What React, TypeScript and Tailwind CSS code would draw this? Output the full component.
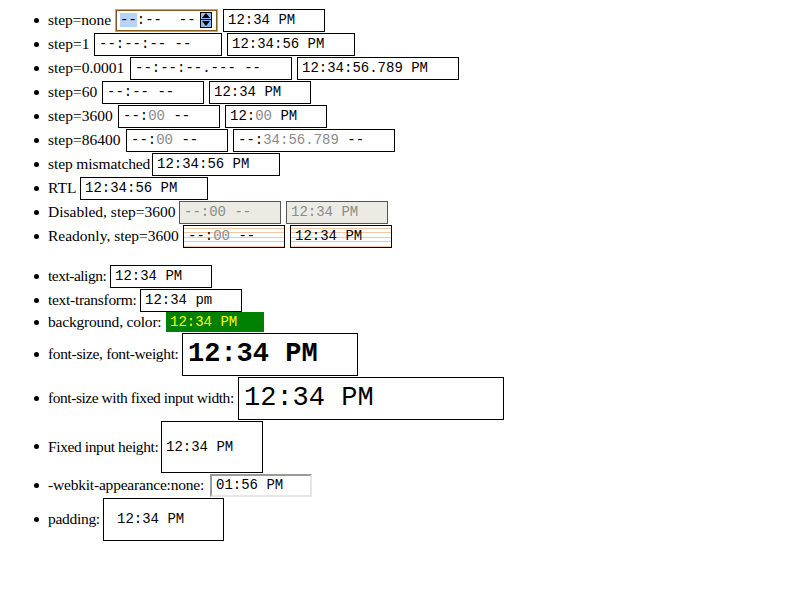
import React from "react";

type BoxProps = {
  w: number;
  h?: number;
  className?: string;
  children?: React.ReactNode;
};

const g = (s: string) => <span className="text-[#8a8a8a]">{s}</span>;

function Box({ w, h = 23, className = "", children }: BoxProps) {
  return (
    <span
      style={{ width: w, height: h }}
      className={`flex shrink-0 items-center whitespace-pre pl-[4px] font-['Liberation_Mono',monospace] text-[14px] leading-none tracking-normal ${className || "border border-black bg-white text-black"}`}
    >
      {children}
    </span>
  );
}

// lw = label width (+ tracking), tuned to the reference's font metrics
function Row({ label, lw, h = 24, children }: { label: string; lw: string; h?: number; children: React.ReactNode }) {
  return (
    <li className="flex items-center" style={{ height: h }}>
      <span className="mr-[9px] h-[5px] w-[5px] shrink-0 rounded-full bg-black" />
      <span className={`mr-[4px] shrink-0 whitespace-pre ${lw}`}>{label}</span>
      <span className="flex items-center gap-[5px]">{children}</span>
    </li>
  );
}

const readonly =
  "border border-black text-black bg-[repeating-linear-gradient(to_bottom,#ffffff_0px,#ffffff_2px,#f3c6a4_2px,#f3c6a4_3px,#ffffff_3px,#ffffff_4.4px)]";

const disabled = "border border-[#555] bg-[#ebebe4] text-[#8a8a8a]";

export default function App() {
  return (
    <div className="min-h-[600px] w-[800px] bg-white pt-[8px] font-['Liberation_Serif',serif] text-[15.5px] text-black">
      <ul className="pl-[34px]">
        <Row label="step=none" lw="w-[63px] tracking-[-0.1px]">
          <Box w={103} className="relative border border-[#d6a24a] bg-white text-black shadow-[inset_0_0_0_1px_#8a5a1c]">
            <span className="bg-[#b7d3f7]">--</span>:--  --
            <span className="absolute right-[5px] top-[2px] flex h-[16px] w-[12px] flex-col items-center justify-center border border-black bg-[#8dbaf0]">
              <span className="h-0 w-0 border-x-[4px] border-b-[5px] border-x-transparent border-b-black" />
              <span className="my-[1px] h-[1px] w-full bg-black" />
              <span className="h-0 w-0 border-x-[4px] border-t-[5px] border-x-transparent border-t-black" />
            </span>
          </Box>
          <Box w={102}>12:34 PM</Box>
        </Row>
        <Row label="step=1" lw="w-[42px]">
          <Box w={128}>--:--:-- --</Box>
          <Box w={128}>12:34:56 PM</Box>
        </Row>
        <Row label="step=0.0001" lw="w-[78px]">
          <Box w={162}>--:--:--.--- --</Box>
          <Box w={162}>12:34:56.789 PM</Box>
        </Row>
        <Row label="step=60" lw="w-[50px]">
          <Box w={102}>--:-- --</Box>
          <Box w={102}>12:34 PM</Box>
        </Row>
        <Row label="step=3600" lw="w-[66px]">
          <Box w={102}>--:{g("00")} --</Box>
          <Box w={102}>12:{g("00")} PM</Box>
        </Row>
        <Row label="step=86400" lw="w-[74px]">
          <Box w={102}>--:{g("00")} --</Box>
          <Box w={162}>--:{g("34:56.789")} --</Box>
        </Row>
        <Row label="step mismatched" lw="w-[100px] tracking-[-0.1px]">
          <Box w={128}>12:34:56 PM</Box>
        </Row>
        <Row label="RTL" lw="w-[28px]">
          <Box w={128}>12:34:56 PM</Box>
        </Row>
        <Row label="Disabled, step=3600" lw="w-[127px]">
          <Box w={102} className={disabled}>--:00 --</Box>
          <Box w={102} className={disabled}>12:34 PM</Box>
        </Row>
        <Row label="Readonly, step=3600" lw="w-[131px]">
          <Box w={102} className={readonly}>--:{g("00")} --</Box>
          <Box w={102} className={readonly}>12:34 PM</Box>
        </Row>
      </ul>
      <ul className="mt-[16px] pl-[34px]">
        <Row label="text-align:" lw="w-[58px] tracking-[-0.5px]">
          <Box w={102}>12:34 PM</Box>
        </Row>
        <Row label="text-transform:" lw="w-[88px] tracking-[-0.3px]">
          <Box w={102}>12:34 pm</Box>
        </Row>
        <Row label="background, color:" lw="w-[114px] tracking-[-0.2px]" h={20}>
          <Box w={98} h={20} className="bg-[#008000] text-[#ffff00]">12:34 PM</Box>
        </Row>
        <Row label="font-size, font-weight:" lw="w-[130px] tracking-[-0.35px]" h={44}>
          <Box w={176} h={43} className="border border-black bg-white pl-[5px] text-[27px] font-bold text-black">
            12:34 PM
          </Box>
        </Row>
        <Row label="font-size with fixed input width:" lw="w-[186px] tracking-[-0.45px]" h={44}>
          <Box w={266} h={43} className="border border-black bg-white pl-[5px] text-[27px] text-black">
            12:34 PM
          </Box>
        </Row>
        <Row label="Fixed input height:" lw="w-[109px] tracking-[-0.4px]" h={53}>
          <Box w={102} h={52}>12:34 PM</Box>
        </Row>
        <Row label="-webkit-appearance:none:" lw="w-[158px] tracking-[-0.2px]">
          <Box w={102} className="border-2 border-b-[#e6e6e6] border-l-[#9a9a9a] border-r-[#e6e6e6] border-t-[#9a9a9a] bg-white pl-[2px] text-black">
            01:56 PM
          </Box>
        </Row>
        <Row label="padding:" lw="w-[51px] tracking-[-0.3px]" h={44}>
          <Box w={121} h={43} className="border border-black bg-white pl-[13px] text-black">
            12:34 PM
          </Box>
        </Row>
      </ul>
    </div>
  );
}
